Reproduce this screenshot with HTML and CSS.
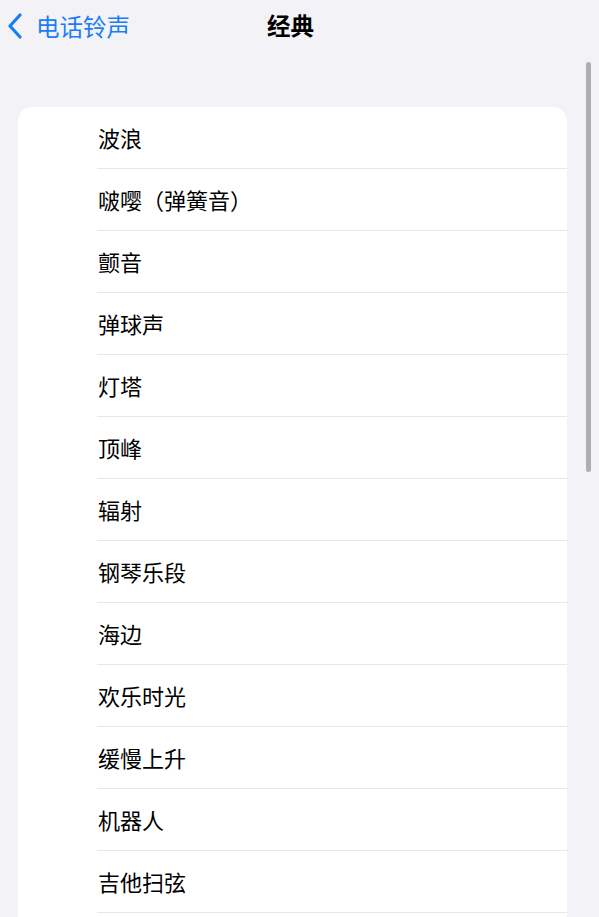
FILE: index.html
```html
<!DOCTYPE html>
<html lang="zh-CN">

<head>
  <meta charset="UTF-8">
  <meta name="viewport" content="width=device-width, initial-scale=1.0">
  <title>经典</title>
  <link rel="stylesheet" href="styles.css">
</head>

<body>
  <div id="screen">
    <!-- 导航栏 -->
    <div class="nav-bar">
      <a class="back" href="#">
        <svg width="16" height="26" viewBox="0 0 16 26">
          <path d="M13 2 L3 13 L13 24" fill="none" stroke="#1b7cf4" stroke-width="3.2" stroke-linecap="round" stroke-linejoin="round"/>
        </svg>
        <span>电话铃声</span>
      </a>
      <div class="title">经典</div>
    </div>

    <!-- 铃声列表 -->
    <div class="list">
      <div class="row">波浪</div>
      <div class="row">啵嘤（弹簧音）</div>
      <div class="row">颤音</div>
      <div class="row">弹球声</div>
      <div class="row">灯塔</div>
      <div class="row">顶峰</div>
      <div class="row">辐射</div>
      <div class="row">钢琴乐段</div>
      <div class="row">海边</div>
      <div class="row">欢乐时光</div>
      <div class="row">缓慢上升</div>
      <div class="row">机器人</div>
      <div class="row">吉他扫弦</div>
      <div class="row"></div>
    </div>

    <div class="scrollbar"></div>
  </div>
</body>

</html>
```

FILE: styles.css
```css
/* 页面整体 */
body {
  margin: 0;
  background-color: #f2f2f7;
  font-family: "Noto Sans CJK SC", "Noto Sans", sans-serif;
  overflow: hidden;
}

#screen {
  position: relative;
  width: 599px;
  height: 917px;
  overflow: hidden;
}

/* 导航栏 */
.nav-bar {
  position: relative;
  height: 52px;
  display: flex;
  align-items: center;
}

.back {
  display: flex;
  align-items: center;
  gap: 13px;
  padding-left: 7px;
  color: #1b7cf4;
  text-decoration: none;
  font-size: 23.5px;
}

.title {
  position: absolute;
  left: 267px;
  top: 8px;
  font-size: 23.5px;
  font-weight: bold;
  color: #000;
}

/* 列表卡片 */
.list {
  margin: 55px 32px 0 18px;
  background-color: #fff;
  border-radius: 14px 14px 0 0;
}

.row {
  height: 61px;
  margin-left: 79px;
  border-bottom: 1px solid #e6e6eb;
  display: flex;
  align-items: center;
  padding-left: 1px;
  padding-bottom: 1px;
  box-sizing: border-box;
  height: 62px;
  font-size: 22px;
  color: #000;
}

/* 滚动条 */
.scrollbar {
  position: absolute;
  left: 586px;
  top: 62px;
  width: 5px;
  height: 410px;
  border-radius: 3px;
  background-color: #aeaeb2;
}
```
